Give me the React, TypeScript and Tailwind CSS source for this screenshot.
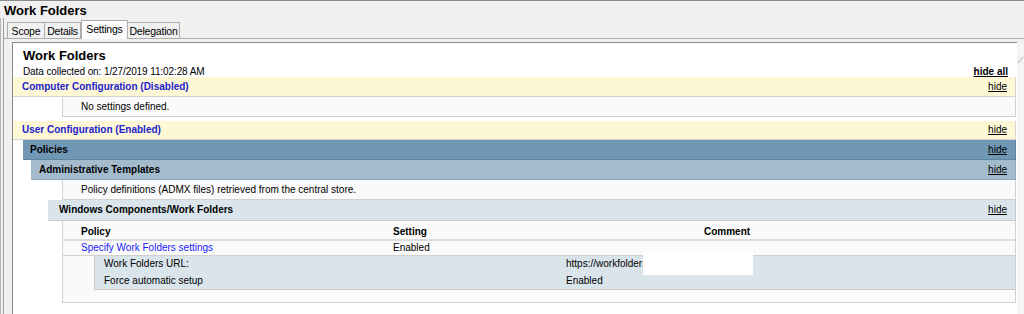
import React from 'react';

const tabs = [
  { label: 'Scope', w: 'w-[38px]' },
  { label: 'Details', w: 'w-[37px]' },
  { label: 'Settings', w: 'w-[47px]', active: true },
  { label: 'Delegation', w: 'w-[53px]' },
];

function HideLink({ bold }: { bold?: boolean }) {
  return (
    <span className={`underline text-black ${bold ? 'font-bold' : ''}`}>{bold ? 'hide all' : 'hide'}</span>
  );
}

export default function App() {
  return (
    <div className="w-[1024px] h-[314px] overflow-hidden bg-[#f0f0f0] border-t border-[#8c8c8c] font-['Liberation_Sans',Arial,sans-serif] text-black">
      {/* Title */}
      <div className="h-[17px] pl-[4px] pt-[2px] text-[13px] font-bold leading-[15px]">Work Folders</div>

      <div className="border-l border-[#b4b4b4] h-full">
        <div className="ml-[2px] border-l border-[#a0a0a0] h-full">
          {/* Tabs */}
          <div className="flex items-end h-[20px] pl-[3px]">
            {tabs.map((t) =>
              t.active ? (
                <div
                  key={t.label}
                  className={`${t.w} h-[19px] -mb-px relative z-10 bg-[#fcfcfc] border border-b-0 border-[#adadad] text-[10.5px] leading-[12px] pt-[2px] text-center tracking-[-0.2px]`}
                >
                  {t.label}
                </div>
              ) : (
                <div
                  key={t.label}
                  className={`${t.w} h-[16px] bg-[#f0f0f0] border border-b-0 border-[#adadad] -ml-px first:ml-0 text-[10.5px] leading-[12px] pt-[2px] text-center tracking-[-0.2px]`}
                >
                  {t.label}
                </div>
              )
            )}
          </div>

          {/* Tab panel */}
          <div className="border-t border-[#adadad] h-full flex pt-[3px] pl-[8px]">
            <div className="w-[1005px] h-full bg-white border-l border-t border-[#8a8a8a] flex flex-col text-[10px]">
              <div className="pl-[10px] pt-[5px] text-[13px] font-bold leading-[15px]">Work Folders</div>
              <div className="mt-[3px] flex justify-between pl-[10px] pr-[9px] leading-[11px]">
                <span className="tracking-[-0.1px]">Data collected on: 1/27/2019 11:02:28 AM</span>
                <HideLink bold />
              </div>

              <div className="mr-[1px] h-[20px] bg-[#fef7d6] border-b border-r border-[#d4d4d4] flex justify-between pl-[9px] pr-[8px] leading-[19px]">
                <span className="font-bold text-[#2222cc]">Computer Configuration (Disabled)</span>
                <HideLink />
              </div>
              <div className="ml-[49px] mr-[1px] h-[20px] bg-[#fafafa] border-l border-r border-b border-[#d0d0d0] pl-[18px] leading-[19px]">
                No settings defined.
              </div>

              <div className="mt-[4px] mr-[1px] h-[19px] bg-[#fef7d6] border-b border-r border-[#d4d4d4] flex justify-between pl-[9px] pr-[8px] leading-[18px]">
                <span className="font-bold text-[#2222cc]">User Configuration (Enabled)</span>
                <HideLink />
              </div>
              <div className="ml-[10px] mr-[1px] h-[20px] bg-[#7097b3] border-b border-r border-[#5f849f] flex justify-between pl-[7px] pr-[8px] leading-[19px]">
                <span className="font-bold">Policies</span>
                <HideLink />
              </div>
              <div className="ml-[18px] mr-[1px] h-[20px] bg-[#a3bbcd] border-b border-r border-[#8ea8bb] flex justify-between pl-[8px] pr-[8px] leading-[20px]">
                <span className="font-bold">Administrative Templates</span>
                <HideLink />
              </div>
              <div className="ml-[49px] mr-[1px] h-[20px] bg-[#fafafa] border-l border-r border-b border-[#d0d0d0] pl-[18px] leading-[20px]">
                Policy definitions (ADMX files) retrieved from the central store.
              </div>
              <div className="ml-[35px] mr-[1px] h-[21px] bg-[#dae4eb] border-b border-r border-[#c0cbd3] flex justify-between pl-[11px] pr-[8px] leading-[20px]">
                <span className="font-bold">Windows Components/Work Folders</span>
                <HideLink />
              </div>

              {/* Policy table */}
              <div className="relative ml-[49px] mr-[1px] h-[82px] bg-[#fafafa] border-l border-r border-b border-[#d0d0d0]">
                <div className="flex h-[20px] pt-[5px] leading-[12px] font-bold border-b-2 border-[#dcdcdc]">
                  <div className="w-[330px] pl-[18px]">Policy</div>
                  <div className="w-[311px]">Setting</div>
                  <div>Comment</div>
                </div>
                <div className="flex h-[15px] pt-[1px] leading-[12px] border-b border-[#d0d0d0]">
                  <div className="w-[330px] pl-[18px] text-[#1a1aff]">Specify Work Folders settings</div>
                  <div>Enabled</div>
                </div>
                <div className="ml-[31px] bg-[#dae4eb] border-l border-b border-[#c8c8c8]">
                  <div className="flex h-[17px] pt-[2px] leading-[12px]">
                    <div className="w-[471px] pl-[9px]">Work Folders URL:</div>
                    <div>https://workfolders</div>
                  </div>
                  <div className="flex h-[16px] pt-[2px] leading-[12px]">
                    <div className="w-[471px] pl-[9px]">Force automatic setup</div>
                    <div>Enabled</div>
                  </div>
                </div>
                <div className="absolute left-[580px] top-[30px] w-[110px] h-[24px] bg-white" />
              </div>
            </div>

            {/* Scrollbar strip */}
            <div className="flex-1 h-full bg-[#f4f4f4]">
              <svg width="7" height="30" className="mt-[13px]">
                <polyline points="1,8 6,2" fill="none" stroke="#a8a8a8" strokeWidth="1" />
              </svg>
            </div>
          </div>
        </div>
      </div>
    </div>
  );
}
